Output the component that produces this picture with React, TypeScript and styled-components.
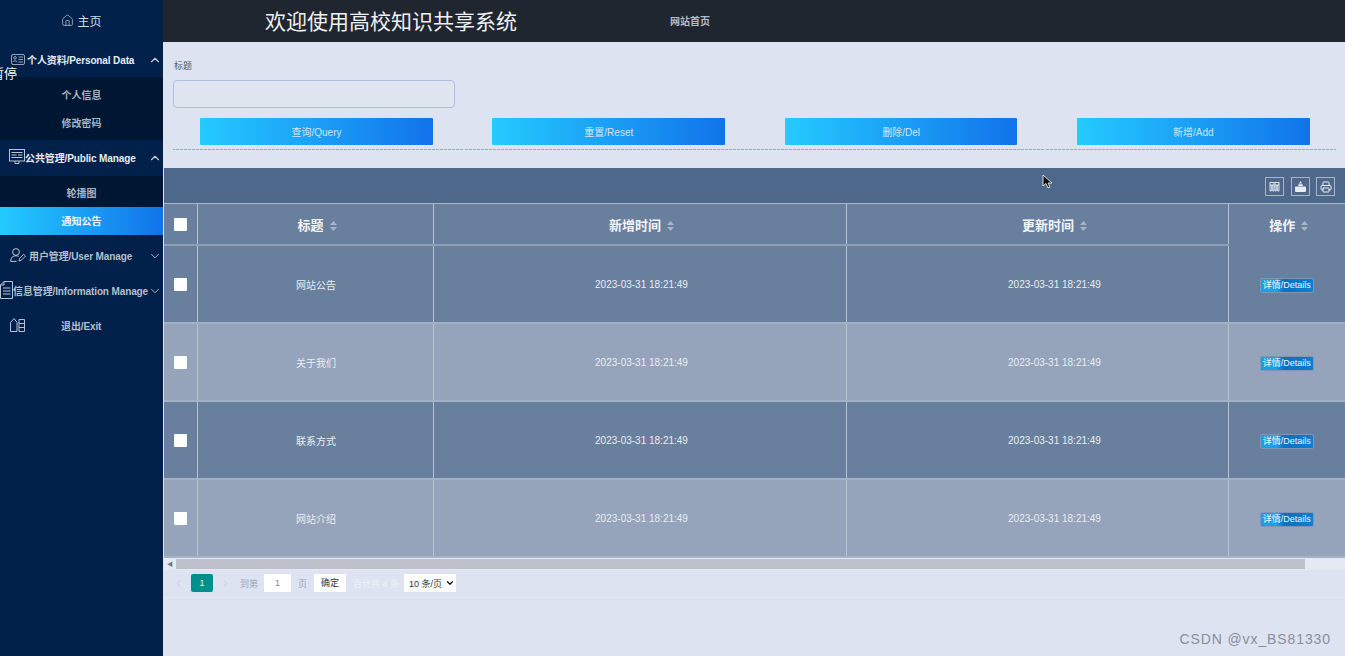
import styled, { createGlobalStyle } from 'styled-components';
import { ChevronDown, ChevronUp, Home, Printer } from 'lucide-react';
import type { ReactNode } from 'react';

const Global = createGlobalStyle`
	html, body { margin: 0; padding: 0; height: 656px; overflow: hidden; }
	body { font-family: "Liberation Sans", "Noto Sans CJK SC", sans-serif; background: #dde3f1; }
	* { box-sizing: border-box; }
`;

const Page = styled.div`
	position: relative;
	display: flex;
	width: 1345px;
	height: 656px;
	overflow: hidden;
`;

const Side = styled.aside`
	flex: 0 0 163px;
	background: #01214a;
	color: #c4ccd8;
	font-size: 10px;
	font-weight: 700;
`;

const HomeRow = styled.div`
	display: flex;
	align-items: center;
	justify-content: center;
	gap: 3px;
	height: 42px;
	padding-bottom: 1px;
	font-size: 12px;
	font-weight: 400;
	color: #d5dbe4;
`;

const GroupRow = styled.div<{ $h: number; $open?: boolean; $lift: number }>`
	position: relative;
	display: flex;
	align-items: center;
	height: ${(p) => p.$h}px;
	padding-bottom: ${(p) => p.$lift}px;
	color: ${(p) => (p.$open ? '#e8ecf2' : '#b4bfcd')};
	letter-spacing: -0.12px;
	white-space: nowrap;
`;

const GroupIcon = styled.span<{ $x: number }>`
	display: flex;
	flex: 0 0 auto;
	margin-left: ${(p) => p.$x}px;
	color: #b9c4d2;
`;

const GroupLabel = styled.span<{ $gap: number }>`
	margin-left: ${(p) => p.$gap}px;
`;

const Caret = styled.span`
	position: absolute;
	right: 1px;
	top: 50%;
	transform: translateY(-50%);
	display: flex;
	color: #c4ccd8;
`;

const Sub = styled.div<{ $top: number; $bottom: number }>`
	padding: ${(p) => p.$top}px 0 ${(p) => p.$bottom}px;
	background: #001733;
`;

const SubItem = styled.div<{ $active?: boolean }>`
	display: flex;
	align-items: center;
	justify-content: center;
	height: 28px;
	padding-bottom: 2px;
	color: ${(p) => (p.$active ? '#f2f6fb' : '#aab4c2')};
	background: ${(p) => (p.$active ? 'linear-gradient(90deg, #24cbff, #1173ea)' : 'transparent')};
`;

const Content = styled.main`
	flex: 1;
	min-width: 0;
	margin-left: 1px;
	display: flex;
	flex-direction: column;
`;

const Top = styled.header`
	display: flex;
	align-items: center;
	flex: 0 0 42px;
	margin-left: -1px;
	background: #20262f;
`;

const Title = styled.h1`
	margin: 0 0 3px 102px;
	width: 405px;
	font-size: 21px;
	font-weight: 400;
	color: #eef0f3;
`;

const TopLink = styled.span`
	margin-bottom: 2px;
	font-size: 10px;
	font-weight: 700;
	color: #b8bcc2;
`;

const Filter = styled.section`
	flex: 0 0 126px;
	padding: 18px 9px 0 9px;
`;

const FieldLabel = styled.div`
	padding-left: 1px;
	font-size: 9px;
	line-height: 13px;
	color: #555c66;
`;

const Field = styled.div`
	width: 282px;
	height: 28px;
	margin-top: 7px;
	background: #e0e5f2;
	border: 1px solid #aebde4;
	border-radius: 4px;
`;

const Actions = styled.div`
	display: flex;
	justify-content: space-between;
	padding: 10px 26.3px 4px 27.2px;
	border-bottom: 1px solid transparent;
	border-image: repeating-linear-gradient(90deg, #5cc3ee 0 3px, #bfdcf0 3px 4px) 1;
`;

const ActionButton = styled.button`
	width: 232.6px;
	height: 27px;
	padding: 0;
	border: none;
	border-radius: 1px;
	background: linear-gradient(90deg, #24cbff, #1173ea);
	color: #d4e4f6;
	font: 10px "Liberation Sans", "Noto Sans CJK SC", sans-serif;
`;

const Toolbar = styled.div`
	display: flex;
	justify-content: flex-end;
	align-items: center;
	gap: 6.5px;
	flex: 0 0 35px;
	padding: 2px 10px 0 0;
	background: #4e688c;
`;

const ToolButton = styled.span`
	display: flex;
	align-items: center;
	justify-content: center;
	width: 19px;
	height: 19px;
	border: 1px solid #a9b5c5;
	color: #e8edf3;
`;

const Table = styled.table`
	width: 1181px;
	border-collapse: collapse;
	table-layout: fixed;
	color: #f1f4f8;
`;

const Th = styled.th<{ $w: number; $shift?: number; $noBottom?: boolean }>`
	width: ${(p) => p.$w}px;
	height: 41px;
	padding: ${(p) => (p.$noBottom ? 0 : 2)}px 0 0 ${(p) => p.$shift ?? 4}px;
	background: #687f9d;
	font-size: 13px;
	font-weight: 700;
	border-top: 1px solid #aab6c6;
	border-left: 1px solid #b8c2d0;
	border-bottom: ${(p) => (p.$noBottom ? 'none' : '2px solid #8c9db4')};
	&:first-child { border-left: none; padding: 0; }
`;

const Td = styled.td<{ $shift?: number; $top?: number }>`
	height: 78px;
	padding: ${(p) => p.$top ?? 1}px 0 0 ${(p) => p.$shift ?? 0}px;
	text-align: center;
	font-size: 10px;
	color: #e8edf3;
	border-left: 1px solid #b8c2d0;
	border-bottom: 2px solid #a4b2c5;
	&:first-child { border-left: none; }
`;

const Row = styled.tr<{ $alt: boolean }>`
	background: ${(p) => (p.$alt ? '#95a4ba' : '#687f9d')};
`;

const Check = styled.span`
	display: inline-block;
	width: 13px;
	height: 13px;
	background: #fff;
	border-radius: 1px;
	vertical-align: middle;
`;

const SortMark = styled.svg`
	margin-left: 6px;
	vertical-align: -1px;
`;

const Details = styled.span`
	display: inline-block;
	width: 54px;
	height: 15px;
	line-height: 13px;
	border: 1px solid #7f95b3;
	border-radius: 2px;
	background: linear-gradient(90deg, #1c9fe6 0 30%, #0d6fbf 45%, #0f7fd0);
	color: #eef5fb;
	font-size: 9px;
`;

const ScrollTrack = styled.div`
	display: flex;
	align-items: center;
	flex: 0 0 12px;
	background: #e6e9f3;
`;

const ScrollArrow = styled.span`
	width: 12px;
	text-align: center;
	font-size: 6px;
	color: #777;
`;

const ScrollThumb = styled.div`
	width: 1129px;
	height: 10px;
	background: #bdbfca;
`;

const Pager = styled.div`
	display: flex;
	align-items: center;
	flex: 0 0 28px;
	padding-left: 9px;
	border-bottom: 1px solid #e6eaf5;
	font-size: 9px;
	color: #9fa6b4;
`;

const Chevron = styled.span<{ $turn: number }>`
	display: flex;
	color: #c8cdd9;
	transform: rotate(${(p) => p.$turn}deg);
`;

const Current = styled.span`
	width: 22px;
	height: 18px;
	margin: 0 7px;
	line-height: 18px;
	text-align: center;
	border-radius: 2px;
	background: #00908c;
	color: #eef;
`;

const PageBox = styled.span<{ $w: number; $ml: number; $c?: string }>`
	width: ${(p) => p.$w}px;
	height: 18px;
	margin-left: ${(p) => p.$ml}px;
	line-height: 18px;
	text-align: center;
	background: #fff;
	color: ${(p) => p.$c ?? '#7d8494'};
`;

const PagerText = styled.span<{ $ml: number; $c?: string }>`
	margin-left: ${(p) => p.$ml}px;
	color: ${(p) => p.$c ?? '#a0a7b4'};
`;

const SizeSelect = styled.span`
	display: flex;
	align-items: center;
	justify-content: space-between;
	width: 52px;
	height: 18px;
	margin-left: 5px;
	padding: 0 1px 0 5px;
	background: #fff;
	color: #333;
`;

const Paused = styled.span`
	position: absolute;
	left: -9px;
	top: 63px;
	font-size: 13px;
	color: #fff;
	text-shadow: 0 0 1px #000;
`;

const Watermark = styled.span`
	position: absolute;
	right: 14px;
	top: 631px;
	font-size: 14px;
	letter-spacing: 0.9px;
	color: #8a8f98;
`;

const Pointer = styled.svg`
	position: absolute;
	left: 1042px;
	top: 174px;
`;

const Sort = () => (
	<SortMark width="7" height="10" viewBox="0 0 7 10">
		<path d="M3.5 0 7 4H0zM3.5 10 0 6h7z" fill="#a9b4c4" />
	</SortMark>
);

const CardIcon = () => (
	<svg width="14" height="11" viewBox="0 0 14 11" fill="none" stroke="currentColor" strokeWidth="0.8">
		<rect x="0.5" y="0.5" width="13" height="10" rx="1.5" />
		<circle cx="4" cy="3.8" r="1.3" />
		<path d="M1.8 8c.3-1.6 4-1.6 4.4 0M7.5 3h4.5M7.5 5.5h4.5M7.5 8h4.5" />
	</svg>
);

const ScreenIcon = () => (
	<svg width="16" height="16" viewBox="0 0 16 16" fill="none" stroke="currentColor" strokeWidth="1">
		<rect x="0.5" y="0.5" width="15" height="11.5" />
		<path d="M2.5 3.5h11M2.5 6h5M9 6h4.5M2.5 8.5h11M6 12v2.5h4V12" />
	</svg>
);

const UserIcon = () => (
	<svg width="16" height="14" viewBox="0 0 16 14" fill="none" stroke="currentColor" strokeWidth="1">
		<circle cx="6" cy="4" r="3.4" />
		<path d="M.7 13.4c0-4 2.4-5.6 5.3-5.6 1 0 2 .2 2.7.6M.7 13.4h6" />
		<path d="m9 13 .5-2.5 4.2-4.2 1.8 1.8-4.2 4.2z" />
	</svg>
);

const ListIcon = () => (
	<svg width="13" height="18" viewBox="0 0 13 18" fill="none" stroke="currentColor" strokeWidth="1">
		<path d="M4 .5h8.5v17H.5V4zM4 .5V4H.5" />
		<path d="M3 7h7.5M3 10h7.5M3 13h7.5" />
	</svg>
);

const DoorIcon = () => (
	<svg width="15" height="14" viewBox="0 0 15 14" fill="none" stroke="currentColor" strokeWidth="1">
		<path d="M.5 13.5v-9L4 .5l3 4v9zM.5 13.5h6.5" />
		<path d="M9 1.5h5.5v12H9zM9 5.5h5.5M9 9.5h5.5" />
	</svg>
);

const Group = ({ icon, x, gap, label, open, h, noCaret, lift = 2 }: { icon: ReactNode; x: number; gap: number; label: string; open?: boolean; h: number; noCaret?: boolean; lift?: number }) => (
	<GroupRow $h={h} $open={open} $lift={lift}>
		<GroupIcon $x={x}>{icon}</GroupIcon>
		<GroupLabel $gap={gap}>{label}</GroupLabel>
		{!noCaret && <Caret>{open ? <ChevronUp size={14} strokeWidth={2} /> : <ChevronDown size={14} strokeWidth={1.5} />}</Caret>}
	</GroupRow>
);

const rows = ['网站公告', '关于我们', '联系方式', '网站介绍'];
const stamp = '2023-03-31 18:21:49';

export default function App() {
	return (
		<Page>
			<Global />
			<Side>
				<HomeRow>
					<Home size={13} strokeWidth={1.2} />
					主页
				</HomeRow>
				<Group h={35} x={11} gap={2} lift={0} open label="个人资料/Personal Data" icon={<CardIcon />} />
				<Sub $top={4} $bottom={3}>
					<SubItem>个人信息</SubItem>
					<SubItem>修改密码</SubItem>
				</Sub>
				<Group h={36} x={9} gap={0} open label="公共管理/Public Manage" icon={<ScreenIcon />} />
				<Sub $top={3} $bottom={1}>
					<SubItem>轮播图</SubItem>
					<SubItem $active>通知公告</SubItem>
				</Sub>
				<Group h={40} x={10} gap={3} label="用户管理/User Manage" icon={<UserIcon />} />
				<Group h={30} x={0} gap={0} label="信息管理/Information Manage" icon={<ListIcon />} />
				<Group h={40} x={10} gap={36} noCaret label="退出/Exit" icon={<DoorIcon />} />
			</Side>
			<Content>
				<Top>
					<Title>欢迎使用高校知识共享系统</Title>
					<TopLink>网站首页</TopLink>
				</Top>
				<Filter>
					<FieldLabel>标题</FieldLabel>
					<Field />
					<Actions>
						<ActionButton>查询/Query</ActionButton>
						<ActionButton>重置/Reset</ActionButton>
						<ActionButton>删除/Del</ActionButton>
						<ActionButton>新增/Add</ActionButton>
					</Actions>
				</Filter>
				<Toolbar>
					<ToolButton>
						<svg width="11" height="11" viewBox="0 0 11 11" fill="none" stroke="currentColor" strokeWidth="0.9">
							<path d="M1 1.5h4M6 1.5h4M1 1v3h4V1M6 1v3h4V1M1 4v6h1.3V4M3.7 4v6H5V4M6 4v6h1.3V4M8.7 4v6H10V4" />
						</svg>
					</ToolButton>
					<ToolButton>
						<svg width="13" height="13" viewBox="0 0 13 13" fill="currentColor">
							<path d="M1 7.5q0-1 1-1h9q1 0 1 1V11q0 1-1 1H2q-1 0-1-1zM4.3 6V4.2h4.4V6zM5 3.6 6.5 1 8 3.6z" />
						</svg>
					</ToolButton>
					<ToolButton>
						<Printer size={12} />
					</ToolButton>
				</Toolbar>
				<Table>
					<thead>
						<tr>
							<Th $w={33}><Check /></Th>
							<Th $w={236}>标题<Sort /></Th>
							<Th $w={413}>新增时间<Sort /></Th>
							<Th $w={382} $shift={35}>更新时间<Sort /></Th>
							<Th $w={117} $noBottom>操作<Sort /></Th>
						</tr>
					</thead>
					<tbody>
						{rows.map((title, i) => (
							<Row key={title} $alt={i % 2 === 1}>
								<Td><Check /></Td>
								<Td $shift={2}>{title}</Td>
								<Td $shift={4}>{stamp}</Td>
								<Td $shift={35}>{stamp}</Td>
								<Td $top={4}><Details>详情/Details</Details></Td>
							</Row>
						))}
					</tbody>
				</Table>
				<ScrollTrack>
					<ScrollArrow>◀</ScrollArrow>
					<ScrollThumb />
				</ScrollTrack>
				<Pager>
					<Chevron $turn={90}><ChevronDown size={11} /></Chevron>
					<Current>1</Current>
					<Chevron $turn={-90}><ChevronDown size={11} /></Chevron>
					<PagerText $ml={9}>到第</PagerText>
					<PageBox $w={27} $ml={6}>1</PageBox>
					<PagerText $ml={7}>页</PagerText>
					<PageBox $w={32} $ml={7} $c="#333">确定</PageBox>
					<PagerText $ml={7} $c="#eef1f8">合计共 4 条</PagerText>
					<SizeSelect>
						10 条/页
						<ChevronDown size={10} strokeWidth={3} color="#111" />
					</SizeSelect>
				</Pager>
			</Content>
			<Paused>暂停</Paused>
			<Watermark>CSDN @vx_BS81330</Watermark>
			<Pointer width="11" height="15" viewBox="0 0 11 15">
				<path d="M1 1v11l3-2.5 2 4.5 2-1-2-4h4z" fill="#111" stroke="#fff" strokeWidth="0.8" />
			</Pointer>
		</Page>
	);
}
